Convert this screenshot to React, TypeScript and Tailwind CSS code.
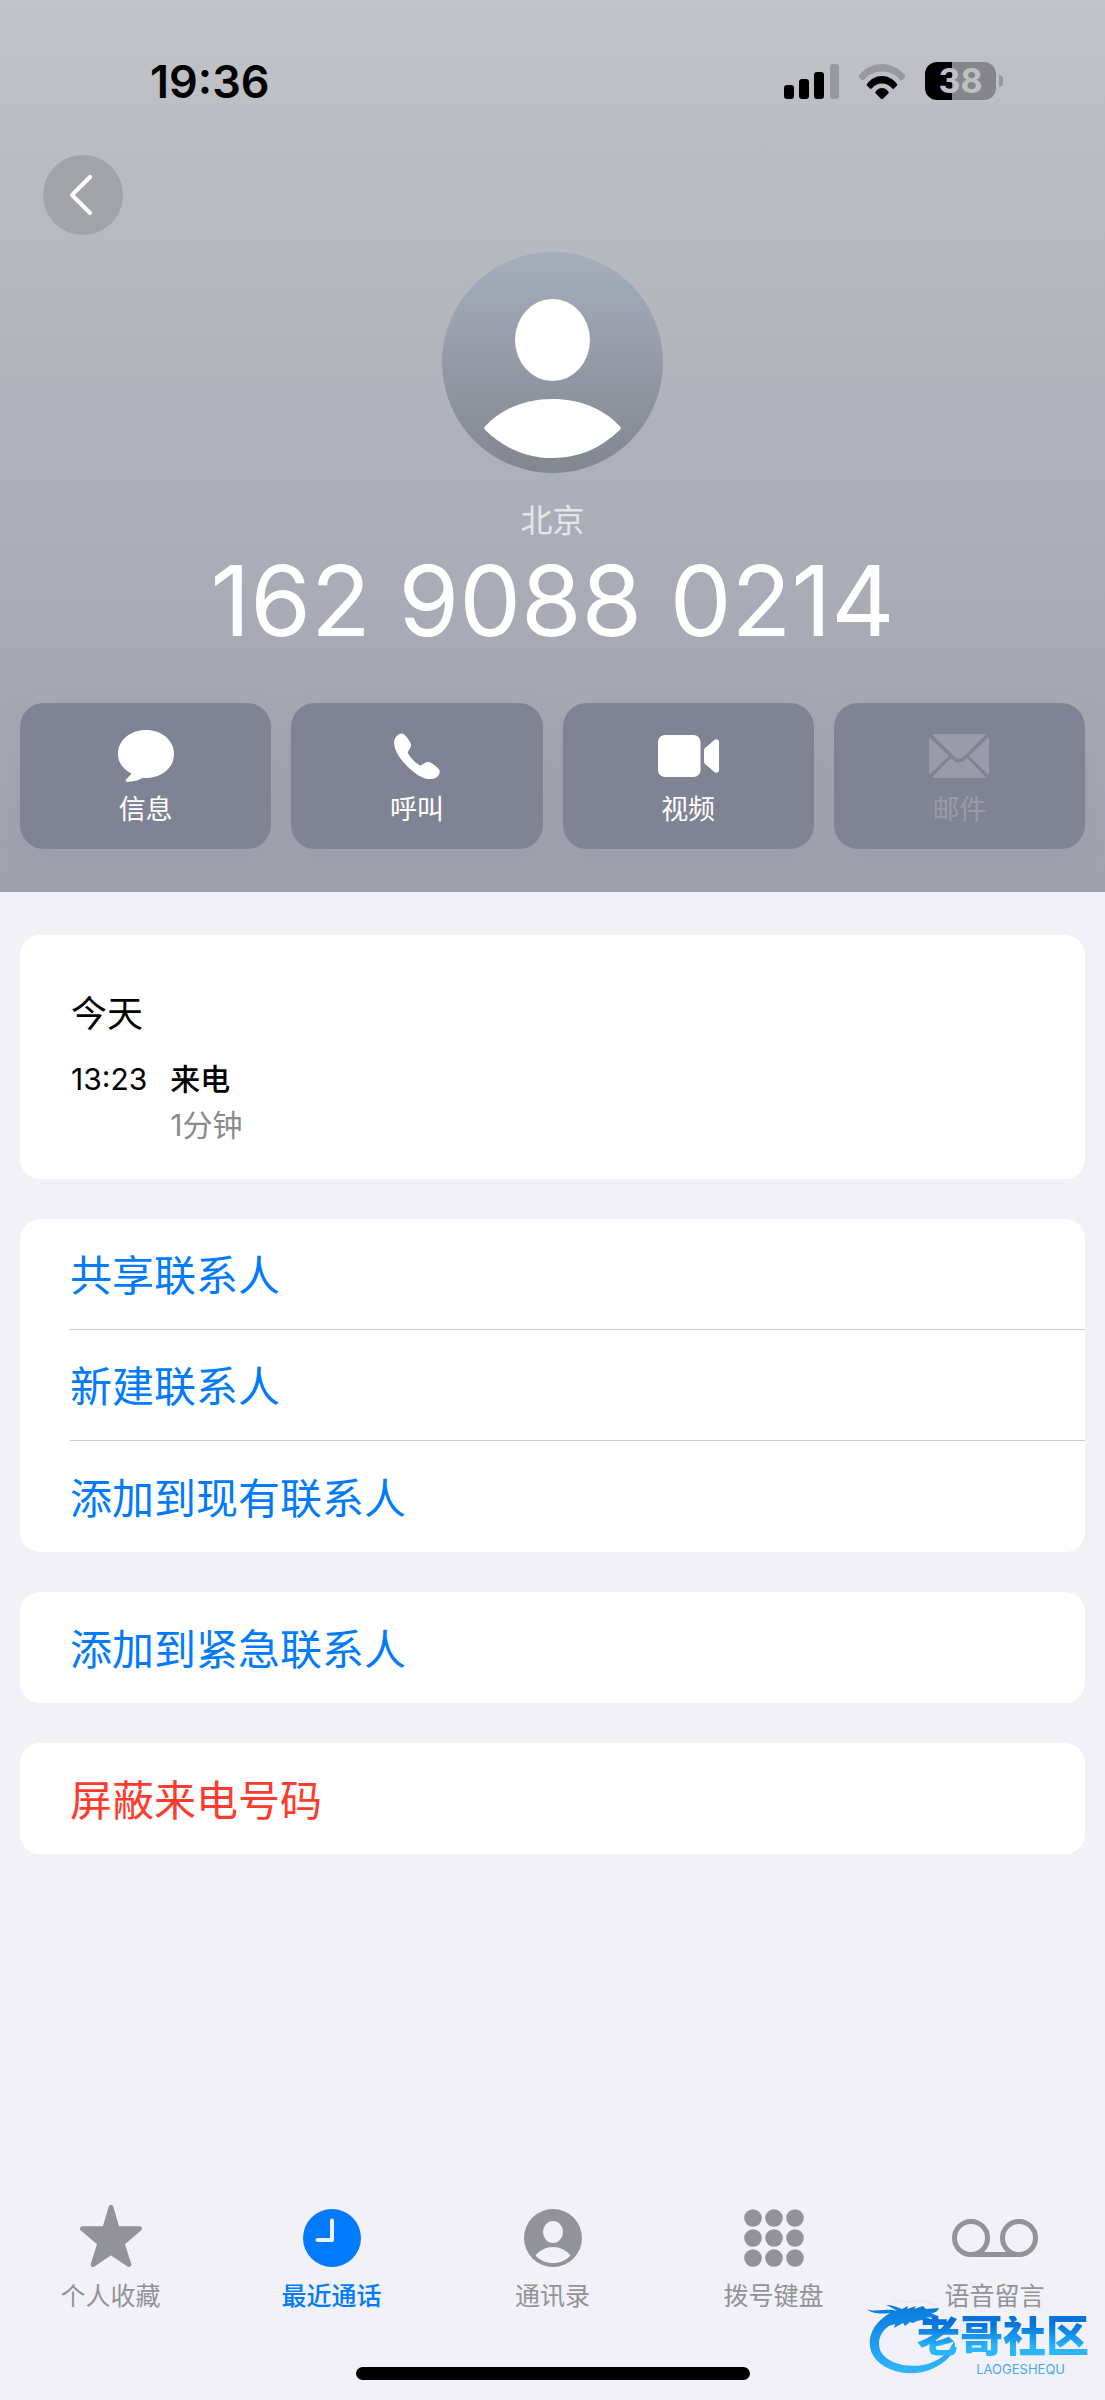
import type { ReactNode } from 'react';

interface Action {
    label: string;
    icon: ReactNode;
    disabled?: boolean;
}

interface Tab {
    label: string;
    icon: ReactNode;
    active?: boolean;
}

const actions: Action[] = [
    {
        label: "信息",
        icon: (
            <svg className="w-14 h-[52px]" viewBox="0 0 56 52" fill="currentColor" aria-hidden="true">
                <path d="M28 0C43.500 0 56 10 56 24S43.500 48 28 48c-1.200 0-2.200 0-3.200-.200C20 51 13.500 51.800 9.500 51.900c-1.900.100-2.400-1.600-1.200-2.900 2-2 4-3.500 5-5.600C5.300 39.500 0 32.700 0 24 0 10 12.500 0 28 0z" />
            </svg>
        ),
    },
    {
        label: "呼叫",
        icon: (
            <svg className="w-[46px] h-[46px]" viewBox="0 0 46 46" fill="currentColor" aria-hidden="true">
                <path d="M3.500 2.300C5.500.500 8 -.300 10 1.200c2.200 1.900 4.600 5.200 6.300 8.200 1.200 2.100.900 4.100-.400 6.100l-1.500 2.400c-.700 1.100-.700 2 0 3.100 2.800 4.400 6.200 7.900 10.500 10.700 1.100.700 2.100.700 3.200 0l2.500-1.700c2-1.300 4-1.400 6.100-.200 3 1.700 5.700 3.800 8 6.300 1.700 1.900 1.300 4.200-.300 6.300-2 2.600-5.100 3.900-8.700 3.800-7.200-.300-15.300-5.700-22.700-13.200C5.600 25.500.500 17.500.100 10.500-.100 7.200 1.100 4.400 3.500 2.300z" />
            </svg>
        ),
    },
    {
        label: "视频",
        icon: (
            <svg className="w-[61px] h-[42px]" viewBox="0 0 61 42" fill="currentColor" aria-hidden="true">
                <rect width="42.500" height="42" rx="7" />
                <path d="M46 15.500c0-1.200.400-2 1.300-2.800l8.800-7.500C58 3.600 61 4.100 61 7v28c0 2.900-3 3.400-4.900 1.800l-8.800-7.500c-.900-.800-1.300-1.600-1.300-2.800z" />
            </svg>
        ),
    },
    {
        label: "邮件",
        disabled: true,
        icon: (
            <svg className="w-[60px] h-11" viewBox="0 0 60 44" fill="currentColor" aria-hidden="true">
                <path d="M3 .500C3.800.100 4.800 0 6 0h48c1.200 0 2.200.100 3 .500L34.500 22.600c-3 3-6 3-9 0z" />
                <path d="M.500 3.300 20 22 .500 40.700C.200 40 0 39 0 38V6c0-1 .200-2 .500-2.700zM59.500 3.300 40 22l19.500 18.700c.300-.700.500-1.700.500-2.700V6c0-1-.200-2-.500-2.700z" />
                <path d="M22 24l1.500 1.500c4 4 9 4 13 0L38 24l19 19.200c-.800.500-1.800.800-3 .800H6c-1.200 0-2.200-.300-3-.800z" />
            </svg>
        ),
    },
];

const tabs: Tab[] = [
    {
        label: "个人收藏",
        icon: (
            <svg className="mb-1 w-[62px] h-[62px]" viewBox="0 0 64 64" fill="currentColor" stroke="currentColor" strokeWidth="5" strokeLinejoin="round" aria-hidden="true">
                <path d="M32 2.500 38.500 24.500H61.500L43.500 39.500 50.500 61.500 32 49 13.500 61.500 20.500 39.500 2.500 24.500H25.500z" />
            </svg>
        ),
    },
    {
        label: "最近通话",
        active: true,
        icon: (
            <svg className="w-[58px] h-[58px]" viewBox="0 0 58 58" aria-hidden="true">
                <circle cx="29" cy="29" r="29" fill="currentColor" />
                <path d="M29 11.500v19.500H14.500" fill="none" stroke="#f2f1f7" strokeWidth="4" strokeLinecap="round" strokeLinejoin="round" />
            </svg>
        ),
    },
    {
        label: "通讯录",
        icon: (
            <svg className="w-[58px] h-[58px]" viewBox="0 0 58 58" aria-hidden="true">
                <circle cx="29" cy="29" r="29" fill="currentColor" />
                <ellipse cx="29" cy="23" rx="10" ry="11" fill="#f2f1f7" />
                <path d="M11.500 46.500C16 41 22 38 29 38s13 3 17.500 8.500C42 51.500 36 54 29 54s-13-2.500-17.500-7.500z" fill="#f2f1f7" />
            </svg>
        ),
    },
    {
        label: "拨号键盘",
        icon: (
            <svg className="w-[60px] h-[58px]" viewBox="0 0 60 58" fill="currentColor" aria-hidden="true">
                {[9, 29, 49].map((cy) =>
                    [9, 30, 51].map((cx) => <circle key={`${cx}-${cy}`} cx={cx} cy={cy} r="8.800" />)
                )}
            </svg>
        ),
    },
    {
        label: "语音留言",
        icon: (
            <svg className="w-[86px] h-[38px]" viewBox="0 0 86 38" fill="none" stroke="currentColor" strokeWidth="5" aria-hidden="true">
                <circle cx="19" cy="19" r="16.500" />
                <circle cx="67" cy="19" r="16.500" />
                <path d="M19 35.500H67" />
            </svg>
        ),
    },
];

function StatusBar() {
    return (
        <div className="flex items-center justify-between pt-[61px] pl-[150px] pr-[102px]">
            <time className="pt-[2px] text-[45px] leading-[38px] font-semibold text-black">19:36</time>
            <div className="flex items-center">
                <svg className="w-14 h-9" viewBox="0 0 56 36" role="img" aria-label="信号">
                    <rect x="0" y="22" width="10" height="14" rx="3" />
                    <rect x="15" y="16" width="10" height="20" rx="3" />
                    <rect x="30" y="9" width="10" height="27" rx="3" />
                    <rect x="46" y="1" width="9" height="35" rx="3" fill="#98999d" />
                </svg>
                <svg className="w-12 h-9 ml-[18px]" viewBox="0 0 48 36" role="img" aria-label="无线网络">
                    <path d="M1 12.500C7 5 15 1 24 1s17 4 23 11.500c.500.700.400 1.500-.200 2.100l-2.500 2.500c-.700.700-1.500.600-2.100-.100C37.500 11.500 31.500 8.500 24 8.500S10.500 11.500 5.800 17c-.600.700-1.400.800-2.100.100l-2.500-2.500C.600 14 .500 13.200 1 12.500z" fill="#98999d" />
                    <path d="M9 21C12.500 16 18 13 24 13s11.500 3 15 8c.400.600.300 1.300-.200 1.800l-2.700 2.700c-.600.600-1.400.500-2-.200C31.500 22 28 20.500 24 20.500s-7.500 1.500-10.100 4.800c-.600.700-1.400.800-2 .200l-2.700-2.700C8.700 22.300 8.600 21.600 9 21z" />
                    <path d="M17.500 28.800C19 26.500 21.300 25 24 25s5 1.500 6.500 3.800c.300.500.200 1.100-.200 1.600l-5 5c-.800.800-1.800.800-2.600 0l-5-5c-.400-.500-.500-1.100-.200-1.600z" />
                </svg>
                <div className="flex items-center ml-[19px]">
                    <div className="flex h-[38px] w-[71px] items-center justify-center rounded-[12px] bg-linear-to-r from-black from-38% to-[#858689] to-38% text-[34px] leading-[38px] font-bold text-[#bfc0c4]">
                        38
                    </div>
                    <div className="ml-[3px] h-3 w-1 rounded-r-full bg-[#98999d]"></div>
                </div>
            </div>
        </div>
    );
}

function Header() {
    return (
        <header className="flex flex-col bg-linear-to-b from-[#c2c3c7] via-[#b0b3bb] via-44% to-[#9fa1ae] pb-[43px]">
            <StatusBar />

            <button aria-label="返回" className="mt-[54px] ml-[43px] flex h-20 w-20 items-center justify-center rounded-full bg-[#a2a3a7]">
                <svg className="mr-1 h-10 w-[22px]" viewBox="0 0 22 40" fill="none" stroke="#ffffff" strokeWidth="4" strokeLinecap="round" strokeLinejoin="round" aria-hidden="true">
                    <path d="M20 2 2 20 20 38" />
                </svg>
            </button>

            {/* Caller */}
            <div className="mt-[17px] flex flex-col items-center">
                <svg className="h-[221px] w-[221px]" viewBox="0 0 221 221" role="img" aria-label="头像">
                    <defs>
                        <linearGradient id="avatar" x1="0" y1="0" x2="0" y2="1">
                            <stop offset="0" stopColor="#a6aebd" />
                            <stop offset="1" stopColor="#82868f" />
                        </linearGradient>
                    </defs>
                    <circle cx="110.500" cy="110.500" r="110.500" fill="url(#avatar)" />
                    <ellipse cx="110.500" cy="88" rx="37.500" ry="41" fill="#ffffff" />
                    <path d="M43 174.500C60 156 84 147 110.500 147S161 156 178 174.500c1 1.200 1 2.200 0 3.200C159 196.500 136 206 110.500 206S62 196.500 43 177.700c-1-1-1-2 0-3.200z" fill="#ffffff" />
                </svg>
                <p className="mt-7 text-[32px] leading-[40px] text-[#e6e6e9]">北京</p>
                <h1 className="mt-[10px] text-[98px] leading-[100px] text-white">162 9088 0214</h1>
            </div>

            <div className="mt-[52px] grid grid-cols-4 gap-5 px-5">
                {actions.map((action) => (
                    <button
                        key={action.label}
                        disabled={action.disabled}
                        className="flex h-[146px] flex-col items-center rounded-[24px] bg-[#808393] pt-[26px] text-white shadow-[0_8px_24px_rgba(128,131,147,0.15)] disabled:text-[#999ba8]"
                    >
                        <span className="flex h-[54px] items-center">{action.icon}</span>
                        <span className="mt-[7px] text-[27px] leading-[40px]">{action.label}</span>
                    </button>
                ))}
            </div>
        </header>
    );
}

function LinkRow({ label, danger }: { label: string; danger?: boolean }) {
    return (
        <button className={`block h-[111px] w-full pt-1 text-left text-[42px] leading-[60px] ${danger ? "text-[#ff3b30]" : "text-[#007aff]"}`}>
            {label}
        </button>
    );
}

function Watermark() {
    return (
        <div className="absolute right-[16px] bottom-[24px] h-20 w-[222px]">
            <svg className="h-20 w-[96px]" viewBox="0 0 96 80" aria-hidden="true">
                <defs>
                    <linearGradient id="dragon" x1="0" y1="0" x2="0" y2="1">
                        <stop offset="0" stopColor="#0878dc" />
                        <stop offset="1" stopColor="#30b7ff" />
                    </linearGradient>
                </defs>
                <path d="M0 13c5 2.500 11 1 17 1 5-.500 9 0 13 1-3-2-6-4-11-6 6 0 11 2 16 4l6-3-1 3 9-3-2 3 9-3 3 3 13-1c-1 3-4 5-8 5l7 3-3 2-9-1 9 4-1 2-12-3-5 1-4 2-3-1-5 4-2-3-9 5 1-4-6 2C14 35 9 46 14 56c7 11 24 16 42 13 15-3 26-11 31-24 2 6 0 11-4 15C70 75 48 81 28 75 10 69 1 58 3 43 5 31 13 23 23 17 14 18 5 18 0 13z" fill="url(#dragon)" />
                <path d="M27 7c1-4 5-2 10-1 8 1 13-2 19-1s11 3 15 7" fill="none" stroke="#e1e5ec" strokeWidth="1" />
            </svg>
            <div className="absolute top-[20px] right-0 flex flex-col items-end">
                <span className="block bg-linear-to-b from-[#0573d9] from-20% to-[#2bb5ff] to-80% bg-clip-text text-[43px] leading-[40px] font-black text-transparent">
                    老哥社区
                </span>
                <span className="mt-[7px] mr-6 block text-[13px] leading-[13px] text-[#4aa9ee]">LAOGESHEQU</span>
            </div>
        </div>
    );
}

export default function App() {
    return (
        <div className="relative flex min-h-screen flex-col bg-[#f2f1f7] font-[Inter,'Noto_Sans_CJK_SC',sans-serif]">
            <Header />

            <main className="flex flex-col gap-10 px-5 pt-[43px]">
                {/* Recent calls */}
                <section className="rounded-[20px] bg-white px-[51px] pt-[54px] pb-[31px] text-black">
                    <h2 className="text-[36px] leading-[50px]">今天</h2>
                    <div className="mt-[17px] flex gap-[23px] text-[30px] leading-[46px]">
                        <time>13:23</time>
                        <div>
                            <p className="font-medium">来电</p>
                            <p className="text-[#8a8a8e]">1分钟</p>
                        </div>
                    </div>
                </section>

                <section className="divide-y divide-[#c9c9cb] rounded-[20px] bg-white pl-[50px]">
                    <LinkRow label="共享联系人" />
                    <LinkRow label="新建联系人" />
                    <LinkRow label="添加到现有联系人" />
                </section>

                <section className="rounded-[20px] bg-white pl-[50px]">
                    <LinkRow label="添加到紧急联系人" />
                </section>

                <section className="rounded-[20px] bg-white pl-[50px]">
                    <LinkRow label="屏蔽来电号码" danger />
                </section>
            </main>

            <footer className="mt-auto flex flex-col items-center pb-5">
                <nav className="grid w-full grid-cols-5">
                    {tabs.map((tab) => (
                        <a
                            key={tab.label}
                            href="#"
                            className={`flex flex-col items-center ${tab.active ? "font-medium text-[#007aff]" : "text-[#929397]"}`}
                        >
                            <span className="flex h-16 items-center">{tab.icon}</span>
                            <span className="mt-[10px] text-[25px] leading-[32px]">{tab.label}</span>
                        </a>
                    ))}
                </nav>
                <div className="mt-[55px] h-[13px] w-[394px] rounded-full bg-black"></div>
            </footer>

            <Watermark />
        </div>
    );
}
